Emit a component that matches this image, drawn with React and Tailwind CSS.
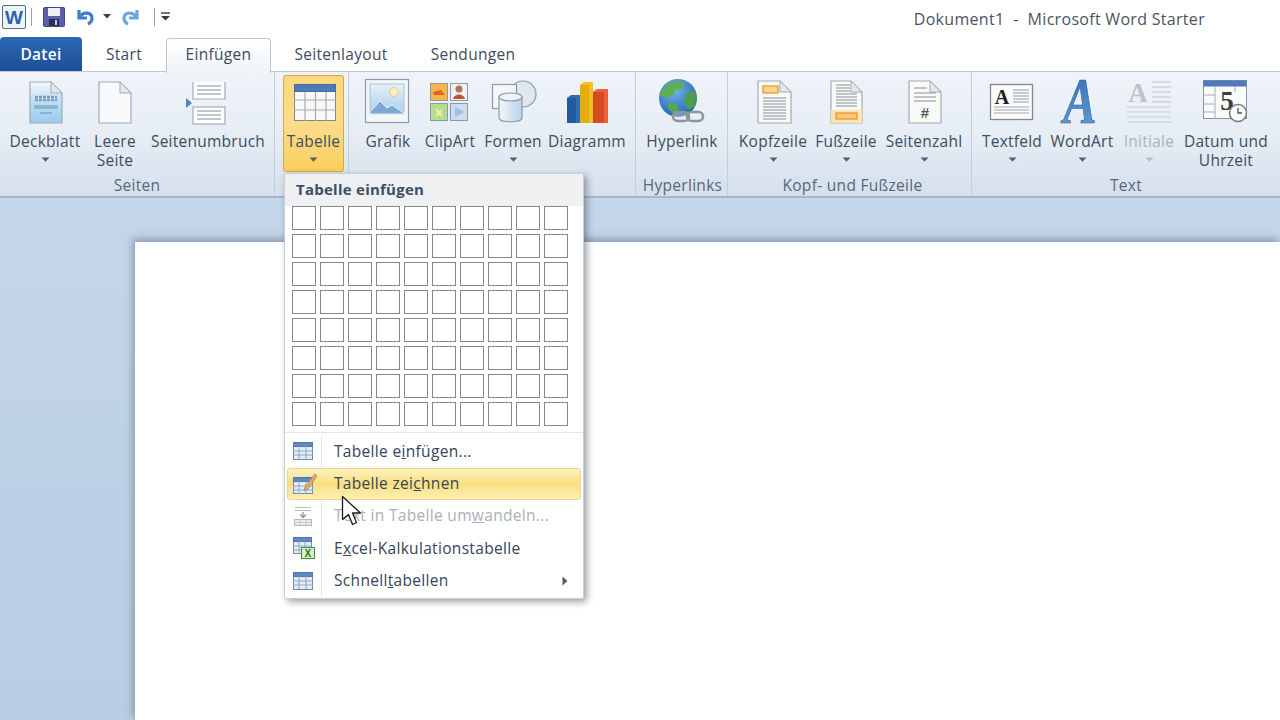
import clsx from 'clsx'

const font = { fontFamily: '"Open Sans", "Noto Sans", sans-serif' }

function DropArrow({ muted }) {
  return (
    <svg width="9" height="5" viewBox="0 0 9 5" className="mt-[6px]">
      <path d="M0.5 0.5h8L4.500 4.800z" fill={muted ? '#b4bcc6' : '#55606e'} />
    </svg>
  )
}

function Page({ x, w = 32, y = 3, h = 42, fill = '#fff' }) {
  const fold = 11
  return (
    <>
      <path d={`M${x} ${y}h${w - fold}l${fold} ${fold}v${h - fold}h-${w}z`} fill={fill} stroke="#a3abb4" strokeWidth="1.200" />
      <path d={`M${x + w - fold} ${y}v${fold}h${fold}z`} fill="#e4e9ee" stroke="#a3abb4" strokeWidth="1" />
    </>
  )
}

function Lines({ x1, x2, ys, color = '#959fac' }) {
  return ys.map((y) => <path key={y} d={`M${x1} ${y}H${x2}`} stroke={color} strokeWidth="1.200" />)
}

function DeckblattIcon() {
  return (
    <svg width="48" height="48" viewBox="0 0 48 48">
      <defs>
        <linearGradient id="deck" x1="0" y1="0" x2="0" y2="1">
          <stop offset="0" stopColor="#f4f8fc" />
          <stop offset="0.4" stopColor="#c4e2f7" />
          <stop offset="1" stopColor="#97cbf0" />
        </linearGradient>
      </defs>
      <Page x={9} w={32} y={4} h={41} fill="url(#deck)" />
      <path d="M14 19h22M14 22h22" stroke="#7f9cbc" strokeWidth="2.500" strokeDasharray="3 1" />
      <Lines x1={13} x2={37} ys={[28, 30]} color="#7f9ab2" />
      <Lines x1={19} x2={31} ys={[35]} color="#7f9ab2" />
    </svg>
  )
}

function LeereIcon() {
  return (
    <svg width="48" height="48" viewBox="0 0 48 48">
      <Page x={8} w={32} y={4} h={41} fill="#f8fafc" />
    </svg>
  )
}

function UmbruchIcon() {
  return (
    <svg width="48" height="48" viewBox="0 0 48 48">
      <path d="M9 4v17h32V4" fill="#fff" stroke="#a3abb4" strokeWidth="1.200" />
      <rect x="9" y="29" width="32" height="17" fill="#fff" stroke="#a3abb4" strokeWidth="1.200" />
      <Lines x1={13} x2={37} ys={[8, 12, 16, 33, 37, 41]} />
      <path d="M2 20l6 5-6 5z" fill="#4d86c8" />
    </svg>
  )
}

function TabelleIcon() {
  return (
    <svg width="48" height="48" viewBox="0 0 48 48">
      <rect x="4.500" y="6.500" width="41" height="36" fill="#f8f9f7" stroke="#7f8790" />
      <rect x="4.500" y="6.500" width="41" height="7" fill="#4d79bd" stroke="#4a6a9c" />
      <path d="M4 22h42M4 32h42M15 14v29M25.500 14v29M36 14v29" stroke="#a7aeb3" strokeWidth="1.200" />
    </svg>
  )
}

function GrafikIcon() {
  return (
    <svg width="48" height="48" viewBox="0 0 48 48">
      <defs>
        <linearGradient id="sky" x1="0" y1="0" x2="0" y2="1">
          <stop offset="0" stopColor="#e6f1fa" />
          <stop offset="1" stopColor="#a7cdec" />
        </linearGradient>
      </defs>
      <rect x="1.500" y="1.500" width="43" height="43" fill="#f3f6f9" stroke="#8f9aa5" strokeWidth="1.200" />
      <rect x="6" y="6" width="34" height="30" fill="url(#sky)" stroke="#b6c2cd" />
      <circle cx="30" cy="14" r="4.500" fill="#fbeec0" stroke="#e8c98c" />
      <path d="M6 34l10-11 7 7 5-3 12 8v1H6z" fill="#7fa6d8" stroke="#fff" strokeWidth="0.800" />
    </svg>
  )
}

function ClipArtIcon() {
  return (
    <svg width="48" height="48" viewBox="0 0 48 48">
      <rect x="4.500" y="5.500" width="17" height="17" fill="#f5b547" stroke="#8d9aa6" />
      <path d="M7 14l8-2 4 5H8z" fill="#e1642a" />
      <rect x="24.500" y="5.500" width="17" height="17" fill="#eef1f3" stroke="#8d9aa6" />
      <circle cx="33" cy="11" r="3.500" fill="#a9745a" />
      <path d="M27 21c1-6 11-6 12 0z" fill="#c5532f" />
      <rect x="4.500" y="25.500" width="17" height="17" fill="#b4dc8f" stroke="#8d9aa6" />
      <path d="M9 30l4 3 4-3-2 5 2 4-4-2-4 2 2-4z" fill="#f1ec9a" />
      <rect x="24.500" y="25.500" width="17" height="17" fill="#c9dcf0" stroke="#8d9aa6" />
      <path d="M29 29l9 5-9 5z" fill="#9dbde0" />
    </svg>
  )
}

function FormenIcon() {
  return (
    <svg width="48" height="48" viewBox="0 0 48 48">
      <defs>
        <linearGradient id="cyl" x1="0" y1="0" x2="1" y2="0">
          <stop offset="0" stopColor="#f1f6fb" />
          <stop offset="1" stopColor="#b8d3ec" />
        </linearGradient>
      </defs>
      <circle cx="34" cy="16" r="13" fill="#dde8f3" stroke="#8d9aa6" strokeWidth="1.200" />
      <rect x="3.500" y="6.500" width="24" height="24" fill="#f4f6f8" stroke="#8d9aa6" strokeWidth="1.200" />
      <path d="M10 19v21c0 5 23 5 23 0V19z" fill="url(#cyl)" stroke="#8d9aa6" strokeWidth="1.200" />
      <ellipse cx="21.500" cy="19" rx="11.500" ry="4" fill="#eef4fa" stroke="#8d9aa6" strokeWidth="1.200" />
    </svg>
  )
}

function DiagrammIcon() {
  return (
    <svg width="48" height="48" viewBox="0 0 48 48">
      <path d="M4 20l4-3h9v28H4z" fill="#2f6fb0" />
      <path d="M4 20h9v25H4z" fill="#1f5b9e" />
      <path d="M17 7l4-3h9v41H17z" fill="#f2c021" />
      <path d="M17 7h9v38h-9z" fill="#e6ad10" />
      <path d="M30 14l4-3h11v34H30z" fill="#e8623c" />
      <path d="M30 14h11v31H30z" fill="#d84a22" />
    </svg>
  )
}

function HyperlinkIcon() {
  return (
    <svg width="48" height="48" viewBox="0 0 48 48">
      <defs>
        <radialGradient id="globe" cx="0.4" cy="0.3" r="0.8">
          <stop offset="0" stopColor="#6fb7ea" />
          <stop offset="1" stopColor="#1f5aa5" />
        </radialGradient>
      </defs>
      <circle cx="20" cy="20" r="19" fill="url(#globe)" />
      <path d="M8 8c6-6 15-5 18-3l-2 6-7 1-2 6-8 1-6-3z" fill="#5fae52" />
      <path d="M27 17l9-5 3 8-3 9-6 3-3-7z" fill="#4f9f4a" />
      <path d="M10 24l8 2 3 6-5 5-6-8z" fill="#57a650" />
      <g fill="none" stroke="#8d949b" strokeWidth="2.600">
        <rect x="15" y="34" width="16" height="9" rx="4.500" fill="#dfe5ea" fillOpacity="0.4" />
        <rect x="29" y="34" width="16" height="9" rx="4.500" />
      </g>
    </svg>
  )
}

function KopfIcon() {
  return (
    <svg width="48" height="48" viewBox="0 0 48 48">
      <Page x={9} w={33} fill="#f9f9f6" />
      <rect x="14" y="8" width="15" height="7" fill="#f9d48b" stroke="#e2942c" strokeWidth="1.200" />
      <Lines x1={14} x2={37} ys={[20, 23, 26, 29, 32, 35, 38, 41]} />
    </svg>
  )
}

function FussIcon() {
  return (
    <svg width="48" height="48" viewBox="0 0 48 48">
      <Page x={9} w={31} fill="#f9f9f6" />
      <Lines x1={14} x2={28} ys={[7, 10, 13]} />
      <Lines x1={14} x2={35} ys={[16, 19, 22, 25, 28]} />
      <rect x="9" y="32" width="31" height="13" fill="#fbe3b4" />
      <rect x="14" y="35" width="21" height="6" fill="#f9c777" stroke="#e2942c" strokeWidth="1.200" />
    </svg>
  )
}

function ZahlIcon() {
  return (
    <svg width="48" height="48" viewBox="0 0 48 48">
      <Page x={9} w={32} fill="#f9f9f6" />
      <Lines x1={14} x2={27} ys={[10]} />
      <Lines x1={14} x2={36} ys={[15, 19, 23]} />
      <text x="25" y="40" textAnchor="middle" fontSize="15" fontWeight="700" fill="#4f5b68" fontFamily="Liberation Sans, sans-serif">#</text>
    </svg>
  )
}

function TextfeldIcon() {
  return (
    <svg width="48" height="48" viewBox="0 0 48 48">
      <rect x="2.500" y="6.500" width="42" height="35" fill="#fbfbfb" stroke="#7f8790" strokeWidth="1.300" />
      <text x="14" y="26" textAnchor="middle" fontSize="20" fontWeight="700" fill="#1e1e1e" fontFamily="Liberation Serif, serif">A</text>
      <Lines x1={25} x2={41} ys={[12, 15, 18, 21, 24]} color="#a2a9b1" />
      <Lines x1={6} x2={41} ys={[29, 32, 35]} color="#a2a9b1" />
    </svg>
  )
}

function WordArtIcon() {
  return (
    <svg width="48" height="48" viewBox="0 0 48 48" className="overflow-visible">
      <defs>
        <linearGradient id="wa" x1="0" y1="0" x2="0" y2="1">
          <stop offset="0" stopColor="#2f6db5" />
          <stop offset="1" stopColor="#6a9fd8" />
        </linearGradient>
      </defs>
      <text transform="translate(22 45) scale(1 1.300)" textAnchor="middle" fontSize="50" fontWeight="700" fontStyle="italic" fill="url(#wa)" stroke="#2f629f" strokeWidth="0.500" fontFamily="Liberation Serif, serif">A</text>
    </svg>
  )
}

function InitialeIcon() {
  return (
    <svg width="48" height="48" viewBox="0 0 48 48">
      <text x="13" y="24" textAnchor="middle" fontSize="27" fontWeight="700" fill="#bcc3cb" fontFamily="Liberation Serif, serif">A</text>
      <Lines x1={27} x2={46} ys={[4, 9, 14, 19, 24]} color="#c6ccd3" />
      <Lines x1={2} x2={46} ys={[29, 34, 39, 44]} color="#c6ccd3" />
    </svg>
  )
}

function DatumIcon() {
  return (
    <svg width="48" height="48" viewBox="0 0 48 48">
      <rect x="1.500" y="2.500" width="43" height="38" fill="#f9fafa" stroke="#8b939c" />
      <rect x="1.500" y="2.500" width="43" height="6" fill="#4d79bd" />
      <path d="M1 17h12M1 26h12M1 34h12M13 8v33M33 8v6" stroke="#a8afb6" />
      <text x="25" y="32" textAnchor="middle" fontSize="27" fontWeight="700" fill="#3c3c3c" fontFamily="Liberation Serif, serif">5</text>
      <circle cx="36" cy="35" r="8.500" fill="#fdfdfd" stroke="#737b85" strokeWidth="1.500" />
      <path d="M36 30v5h4" fill="none" stroke="#4b525b" strokeWidth="1.300" />
    </svg>
  )
}

function RibbonButton({ width, icon, label, arrow, active, muted }) {
  return (
    <div
      style={{ width }}
      className={clsx(
        'h-[97px] flex flex-col items-center pt-[3px] shrink-0 rounded-[3px]',
        active && 'bg-gradient-to-b from-[#fdd97c] via-[#fcdc8b] to-[#fbcf5c] outline outline-1 -outline-offset-1 outline-[#d3a84c]',
        muted ? 'text-[#a9b2bd]' : 'text-[#3d4c60]',
      )}
    >
      {icon}
      <div className="mt-[6px] text-center text-[15.500px] tracking-[0.25px] leading-[19px] whitespace-nowrap">
        {label.map((line) => <div key={line}>{line}</div>)}
      </div>
      {arrow && <DropArrow muted={muted} />}
    </div>
  )
}

function RibbonGroup({ width, pad, name, nudge = 0, children, last }) {
  return (
    <div
      style={{ width, paddingLeft: pad }}
      className={clsx('h-full flex flex-col pt-[3px] shrink-0', !last && 'border-r border-[#c3cedb]')}
    >
      <div className="flex h-[97px]">{children}</div>
      <div
        style={{ marginLeft: nudge - pad }}
        className="mt-[4px] h-[19px] leading-[19px] text-center text-[15.500px] tracking-[0.3px] text-[#56677c] whitespace-nowrap"
      >
        {name}
      </div>
    </div>
  )
}

function SmallTable() {
  return (
    <svg width="22" height="22" viewBox="0 0 22 22">
      <rect x="1.500" y="2.500" width="19" height="17" fill="#e4ecf6" stroke="#6e89ad" />
      <rect x="1.500" y="2.500" width="19" height="4" fill="#5e8ac6" stroke="#5176a8" />
      <path d="M1 11h20M1 15h20M7 6v13M14 6v13" stroke="#8ea6c6" />
    </svg>
  )
}

function DrawTable() {
  return (
    <svg width="26" height="24" viewBox="0 0 26 24">
      <rect x="1.500" y="5.500" width="19" height="16" fill="#e4ecf6" stroke="#6e89ad" />
      <rect x="1.500" y="5.500" width="19" height="4" fill="#5e8ac6" stroke="#5176a8" />
      <path d="M1 14h20M1 18h20M7 9v13M14 9v13" stroke="#8ea6c6" />
      <path d="M13 15l10-13 2 2-9 13-4 2z" fill="#e8a96b" stroke="#a9784c" strokeWidth="0.700" />
    </svg>
  )
}

function ConvertIcon() {
  return (
    <svg width="22" height="22" viewBox="0 0 22 22">
      <path d="M3 2.500h16M3 5.500h16" stroke="#b7bdc3" />
      <path d="M11 7v5M8 9.500l3 3 3-3" fill="none" stroke="#8a9299" strokeWidth="1.300" />
      <rect x="2.500" y="14.500" width="17" height="6" fill="#e9ebed" stroke="#b1b7bd" />
      <path d="M2 17.500h18M8 15v5M14 15v5" stroke="#c4c9ce" />
    </svg>
  )
}

function ExcelIcon() {
  return (
    <svg width="24" height="24" viewBox="0 0 24 24">
      <rect x="1.500" y="1.500" width="18" height="16" fill="#e4ecf6" stroke="#6e89ad" />
      <rect x="1.500" y="1.500" width="18" height="4" fill="#5e8ac6" stroke="#5176a8" />
      <path d="M1 10h19M1 14h19M7 5v13M13 5v13" stroke="#8ea6c6" />
      <rect x="9.500" y="11.500" width="13" height="11" fill="#d9efc9" stroke="#3f8f3f" />
      <text x="16" y="21" textAnchor="middle" fontSize="10" fontWeight="700" fill="#1f7a2e" fontFamily="Liberation Sans, sans-serif">X</text>
    </svg>
  )
}

function MenuItem({ icon, active, muted, children, submenu }) {
  return (
    <div
      className={clsx(
        'relative h-[32.400px] flex items-center text-[15.500px] tracking-[0.32px]',
        muted ? 'text-[#aab0b7]' : 'text-[#34445a]',
      )}
    >
      {active && (
        <div className="absolute left-[2px] right-[2px] top-[1px] bottom-0 rounded-[3px] border border-[#ead58a] bg-gradient-to-b from-[#fdf3bf] via-[#fbdf7e] to-[#fdf0b4]" />
      )}
      <div className="relative w-[37px] pl-[7px] flex justify-start">{icon}</div>
      <div className="relative pl-[12px] flex-1 whitespace-nowrap">{children}</div>
      {submenu && (
        <svg width="6" height="10" viewBox="0 0 6 10" className="relative mr-[15px]">
          <path d="M0.500 0.500v9l5-4.500z" fill="#4e5a68" />
        </svg>
      )}
    </div>
  )
}

function TableMenu() {
  const cells = Array.from({ length: 80 }, (_, i) => i)
  return (
    <div className="absolute left-[284px] top-[173px] w-[300px] h-[426px] bg-white border border-[#c9ced4] rounded-[2px] shadow-[3px_3px_7px_rgba(40,50,60,0.45)]">
      <div className="h-[32px] bg-[#eef0f2] pl-[11px] text-[15px] tracking-[0.25px] leading-[30px] font-bold text-[#3c4e65]">
        Tabelle einfügen
      </div>
      <div className="grid grid-cols-[repeat(10,24px)] grid-rows-[repeat(8,24px)] gap-[4px] ml-[7px]">
        {cells.map((c) => (
          <div key={c} className="border border-[#85888c]" />
        ))}
      </div>
      <div className="h-[1px] bg-[#e3e5e8] mt-[6px] mb-[2px]" />
      <div className="relative">
        <div className="absolute left-[36px] top-0 bottom-0 w-[1px] bg-[#e3e5e8]" />
        <MenuItem icon={<SmallTable />}>Tabelle e<u>i</u>nfügen...</MenuItem>
        <MenuItem icon={<DrawTable />} active>Tabelle zei<u>c</u>hnen</MenuItem>
        <MenuItem icon={<ConvertIcon />} muted>Text in Tabelle um<u>w</u>andeln...</MenuItem>
        <MenuItem icon={<ExcelIcon />}>E<u>x</u>cel-Kalkulationstabelle</MenuItem>
        <MenuItem icon={<SmallTable />} submenu>Schnell<u>t</u>abellen</MenuItem>
      </div>
    </div>
  )
}

function Cursor() {
  return (
    <svg width="22" height="32" viewBox="0 0 22 32" className="absolute left-[341px] top-[495px]">
      <path d="M1.500 1.500v23l6-5 4 10 4-2-4-9.500h8z" fill="#fff" stroke="#1c1c1c" strokeWidth="1.300" strokeLinejoin="round" />
    </svg>
  )
}

function QuickAccess() {
  return (
    <div className="flex items-center pb-[4px]">
      <svg width="24" height="24" viewBox="0 0 24 24" className="ml-[2px]">
        <rect x="0.500" y="0.500" width="23" height="23" rx="1.500" fill="#eef3f7" stroke="#4d6f8a" />
        <text x="12" y="19" textAnchor="middle" fontSize="19" fontWeight="700" fill="#2a63ad" fontFamily="Liberation Sans, sans-serif">W</text>
      </svg>
      <div className="w-[1px] h-[18px] bg-[#9aa3ad] ml-[5px]" />
      <svg width="22" height="20" viewBox="0 0 22 20" className="ml-[11px]">
        <rect x="0.500" y="0.500" width="21" height="19" rx="1" fill="#5a5fa8" stroke="#43467f" />
        <rect x="5" y="1" width="12" height="8" fill="#eef0f6" />
        <rect x="6" y="12" width="10" height="7" fill="#2c2f55" />
        <rect x="12" y="13" width="2" height="5" fill="#c7cce0" />
      </svg>
      <svg width="20" height="18" viewBox="0 0 20 18" className="ml-[10px]">
        <path d="M4 2v8h8" fill="none" stroke="#3f7fc6" strokeWidth="3.200" />
        <path d="M5 9c3-6 13-5 12 2-.3 2-2 4-4 5" fill="none" stroke="#3f7fc6" strokeWidth="3.200" />
      </svg>
      <svg width="8" height="5" viewBox="0 0 8 5" className="ml-[8px]"><path d="M0 0h8L4 4.500z" fill="#333c47" /></svg>
      <svg width="20" height="18" viewBox="0 0 20 18" className="ml-[10px]">
        <path d="M16 2v8H8" fill="none" stroke="#6fa6da" strokeWidth="3.200" />
        <path d="M15 9c-3-6-13-5-12 2 .3 2 2 4 4 5" fill="none" stroke="#6fa6da" strokeWidth="3.200" />
      </svg>
      <div className="w-[1px] h-[18px] bg-[#9aa3ad] ml-[13px]" />
      <svg width="9" height="9" viewBox="0 0 9 9" className="ml-[6px]">
        <path d="M0 1h9" stroke="#333c47" strokeWidth="1.400" />
        <path d="M0 4h9L4.500 8.500z" fill="#333c47" />
      </svg>
    </div>
  )
}

export default function App() {
  return (
    <div style={font} className="relative w-[1280px] h-[720px] overflow-hidden flex flex-col bg-white">
      {/* Title bar */}
      <div className="h-[37px] flex items-center justify-between pr-[75px]">
        <QuickAccess />
        <div className="pt-[1px] text-[16px] tracking-[0.3px] text-[#4a5563] whitespace-pre">Dokument1  -  Microsoft Word Starter</div>
      </div>

      {/* Tabs */}
      <div className="h-[34px] flex text-[15.500px] tracking-[0.3px] text-[#3d4c60] relative z-10">
        <div className="w-[82px] pt-[1px] flex items-center justify-center rounded-t-[4px] bg-gradient-to-b from-[#2a69b4] to-[#1d4f94] text-white font-semibold">Datei</div>
        <div className="w-[84px] pt-[1px] flex items-center justify-center">Start</div>
        <div className="w-[105px] h-[35px] mt-[1px] pb-[2px] flex items-center justify-center rounded-t-[4px] border border-b-0 border-[#bcc8d4] bg-gradient-to-b from-white to-[#eff4f9]">Einfügen</div>
        <div className="w-[140px] pt-[1px] flex items-center justify-center">Seitenlayout</div>
        <div className="w-[124px] pt-[1px] flex items-center justify-center">Sendungen</div>
      </div>

      {/* Ribbon */}
      <div className="h-[127px] flex border-t border-b-2 border-t-[#bcc8d4] border-b-[#a8b6c6] bg-gradient-to-b from-[#f0f4f9] via-[#e6edf5] to-[#d5e0ec]">
        <RibbonGroup width={275} pad={5} name="Seiten">
          <RibbonButton width={80} icon={<DeckblattIcon />} label={['Deckblatt']} arrow />
          <RibbonButton width={60} icon={<LeereIcon />} label={['Leere', 'Seite']} />
          <RibbonButton width={126} icon={<UmbruchIcon />} label={['Seitenumbruch']} />
        </RibbonGroup>
        <RibbonGroup width={74} pad={8} name="">
          <RibbonButton width={61} icon={<TabelleIcon />} label={['Tabelle']} arrow active />
        </RibbonGroup>
        <RibbonGroup width={287} pad={9} name="">
          <RibbonButton width={60} icon={<GrafikIcon />} label={['Grafik']} />
          <RibbonButton width={64} icon={<ClipArtIcon />} label={['ClipArt']} />
          <RibbonButton width={62} icon={<FormenIcon />} label={['Formen']} arrow />
          <RibbonButton width={86} icon={<DiagrammIcon />} label={['Diagramm']} />
        </RibbonGroup>
        <RibbonGroup width={92} pad={0} name="Hyperlinks" nudge={2}>
          <RibbonButton width={92} icon={<HyperlinkIcon />} label={['Hyperlink']} />
        </RibbonGroup>
        <RibbonGroup width={244} pad={5} name="Kopf- und Fußzeile" nudge={6}>
          <RibbonButton width={80} icon={<KopfIcon />} label={['Kopfzeile']} arrow />
          <RibbonButton width={66} icon={<FussIcon />} label={['Fußzeile']} arrow />
          <RibbonButton width={90} icon={<ZahlIcon />} label={['Seitenzahl']} arrow />
        </RibbonGroup>
        <RibbonGroup width={308} pad={5} name="Text" last>
          <RibbonButton width={70} icon={<TextfeldIcon />} label={['Textfeld']} arrow />
          <RibbonButton width={70} icon={<WordArtIcon />} label={['WordArt']} arrow />
          <RibbonButton width={64} icon={<InitialeIcon />} label={['Initiale']} arrow muted />
          <RibbonButton width={90} icon={<DatumIcon />} label={['Datum und', 'Uhrzeit']} />
        </RibbonGroup>
      </div>

      {/* Document area */}
      <div className="flex-1 flex flex-col pt-[44px] pl-[135px] bg-gradient-to-b from-[#c3d6ea] to-[#b9cee3]">
        <div className="flex-1 bg-white shadow-[-2px_-3px_8px_rgba(60,80,100,0.45)]" />
      </div>

      <TableMenu />
      <Cursor />
    </div>
  )
}
